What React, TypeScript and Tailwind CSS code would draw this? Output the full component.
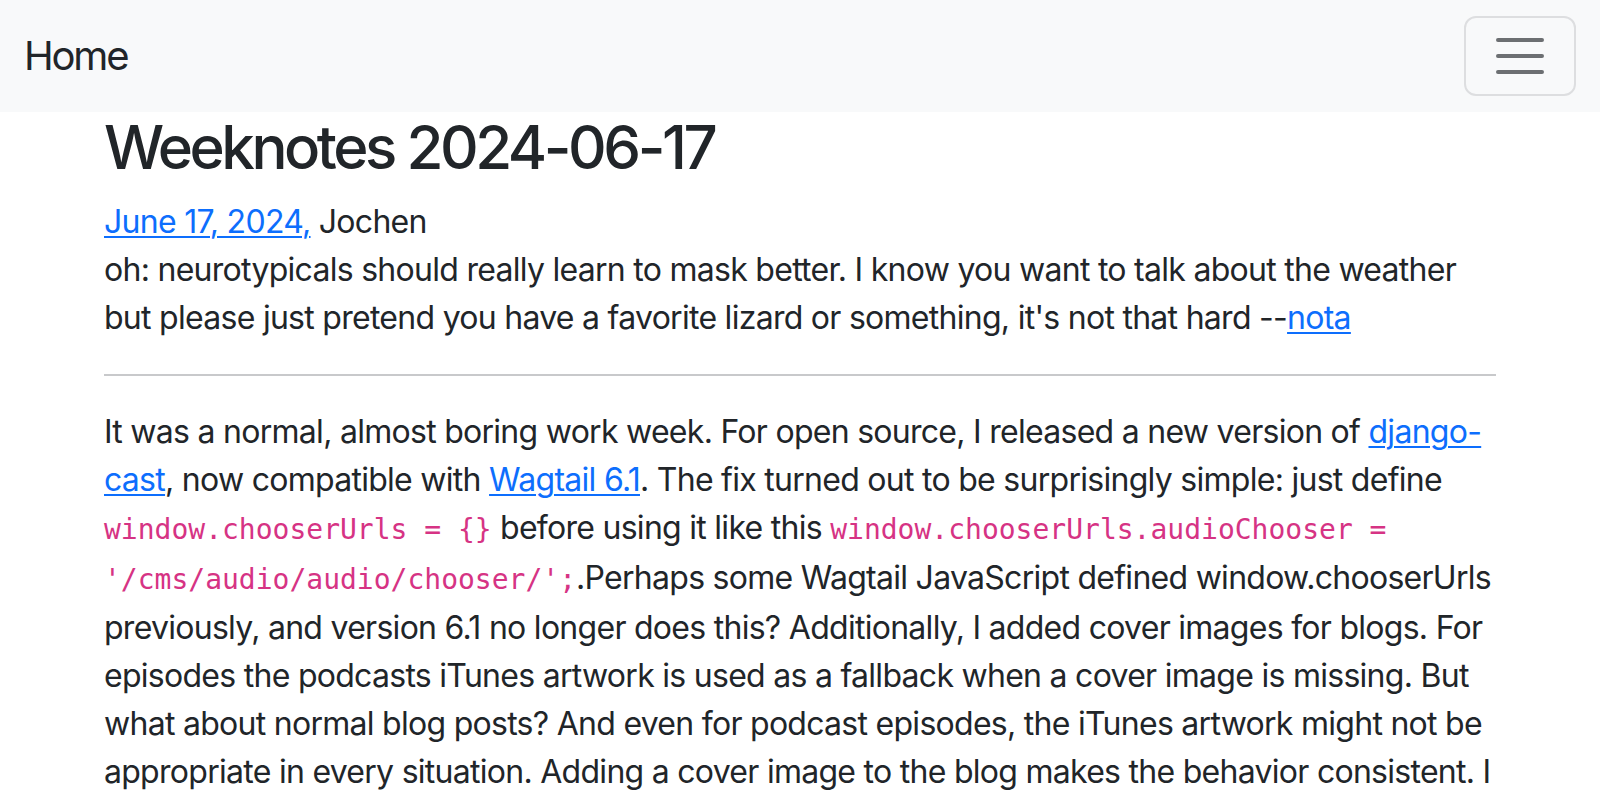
const Toggler = () => (
  <button
    type="button"
    aria-label="Toggle navigation"
    className="flex h-[80px] w-[112px] items-center justify-center rounded-xl border-2 border-[rgba(33,37,41,0.12)]"
  >
    <svg width="60" height="60" viewBox="0 0 30 30" fill="none">
      <path
        d="M4 7h22M4 15h22M4 23h22"
        stroke="rgba(33,37,41,0.65)"
        strokeWidth="2"
        strokeLinecap="round"
      />
    </svg>
  </button>
)

const Code = ({ children }: { children: string }) => (
  <code className="font-['DejaVu_Sans_Mono',monospace] text-[28px] tracking-normal text-[#d63384]">
    {children}
  </code>
)

const Link = ({ children }: { children: string }) => (
  <a href="#" className="text-[#0d6efd] underline decoration-2 underline-offset-[3px]">
    {children}
  </a>
)

export default function App() {
  return (
    <div className="h-screen overflow-hidden bg-white font-['Inter',sans-serif] text-[#212529]">
      <nav className="flex items-center justify-between bg-[#f8f9fa] px-6 py-4">
        <a href="#" className="py-[10px] text-[40px] leading-[60px] tracking-[-2.2px]">
          Home
        </a>
        <Toggler />
      </nav>

      <main className="mx-auto max-w-[1440px] px-6">
        <h1 className="mb-4 text-[60px] leading-[70px] font-medium tracking-[-3.45px]">
          Weeknotes 2024-06-17
        </h1>

        <div className="text-[32px] leading-[48px] tracking-[-0.72px]">
          <div>
            <Link>June 17, 2024,</Link> Jochen
          </div>
          <p className="mb-8">
            oh: neurotypicals should really learn to mask better. I know you want to talk about the
            weather but please just pretend you have a favorite lizard or something, it's not that
            hard --<Link>nota</Link>
          </p>

          <hr className="my-8 border-t-2 border-[#c8c9cb]" />

          <p className="mb-8">
            It was a normal, almost boring work week. For open source, I released a new version
            of <Link>django-cast</Link>, now compatible with <Link>Wagtail 6.1</Link>. The fix
            turned out to be surprisingly simple: just define <Code>{"window.chooserUrls = {}"}</Code>{" "}
            before using it like this{" "}
            <Code>{"window.chooserUrls.audioChooser = '/cms/audio/audio/chooser/';"}</Code>.Perhaps
            some Wagtail JavaScript defined window.chooserUrls previously, and version 6.1 no longer
            does this? Additionally, I added cover images for blogs. For episodes the podcasts
            iTunes artwork is used as a fallback when a cover image is missing. But what about
            normal blog posts? And even for podcast episodes, the iTunes artwork might not be
            appropriate in every situation. Adding a cover image to the blog makes the behavior
            consistent. I also spent some time on the podcast feed and fixed a few small bugs.
          </p>
        </div>
      </main>
    </div>
  )
}
